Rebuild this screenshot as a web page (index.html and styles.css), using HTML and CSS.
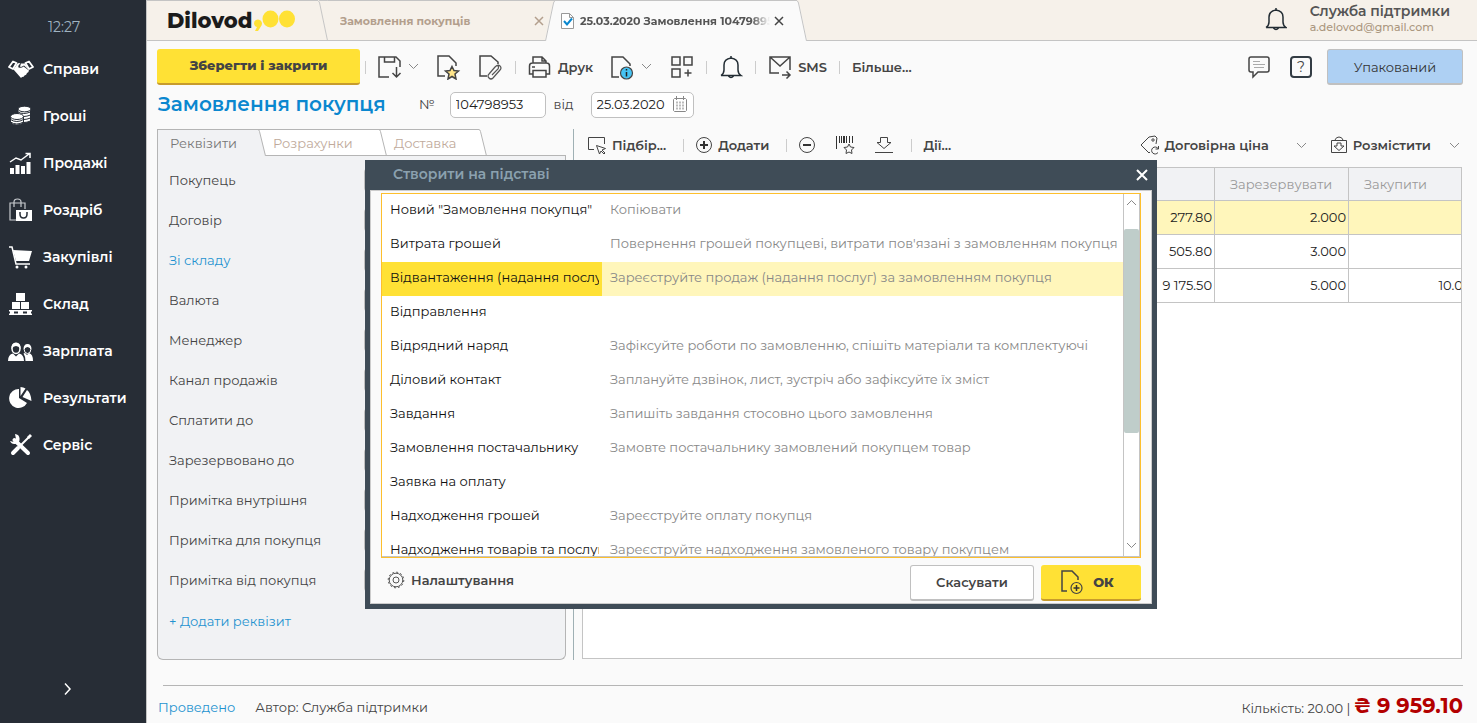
FILE: index.html
```html
<!DOCTYPE html>
<html lang="uk">
<head>
  <meta charset="UTF-8">
  <meta name="viewport" content="width=device-width, initial-scale=1.0">
  <title>25.03.2020 Замовлення 104798953</title>
  <link rel="stylesheet" href="styles.css">
</head>
<body>

  <!-- Sidebar -->
  <aside class="sidebar">
    <div class="clock">12:27</div>
    <nav class="menu">
      <a href="#"><svg width="26" height="24" viewBox="0 0 26 24"><path fill="none" stroke="#fff" stroke-width="1.800" stroke-linejoin="round" d="M1 10l4-5.500 3.500 1.500L5 12zM25 10l-4-5.500L17.500 6l3.500 6z"/><path fill="#fff" d="M5.500 12.500L9.500 6.500q1.500-1 3 0-3 2-2 4 3 1 5-1l5.500 4q-.500 2-2 2.500-.500 2-2.500 2.500-.500 1.500-2.500 1.500L13 21z"/><path fill="#fff" d="M13 6.500h4l3.500 6-4.500-4-3 1.500-1-.500z"/></svg>Справи</a>
      <a href="#"><svg width="26" height="24" viewBox="0 0 26 24"><g fill="#fff" stroke="#272d36"><path d="M10 5v12q5 3 12.500 0V5"/><ellipse cx="16.500" cy="5" rx="6.500" ry="2.800"/><path fill="none" d="M10 8q5 3 12.500 0M10 11q5 3 12.500 0M10 14q5 3 12.500 0"/><path d="M2.500 12v7q6 4 13 0v-7"/><ellipse cx="9" cy="12.500" rx="6.500" ry="3"/><path fill="none" d="M2.500 15.500q6 4 13 0M2.500 18q6 4 13 0"/></g></svg>Гроші</a>
      <a href="#"><svg width="26" height="24" viewBox="0 0 26 24"><path fill="#fff" d="M2 17h4v6H2zM7.500 14h4v9h-4zM13 15h4v8h-4zM18.500 11h4v12h-4z"/><path fill="none" stroke="#fff" stroke-width="1.500" d="M2 11l6-4 5 2 8-6M17.500 2.500H22V7"/></svg>Продажі</a>
      <a href="#"><svg width="26" height="24" viewBox="0 0 26 24"><path fill="none" stroke="#c9ccd0" stroke-width="1.200" d="M8 22H2V5h15v6M6 9V4q0-3 3.500-3T13 4v5"/><path fill="#fff" d="M8 12h16v11H8z"/><path fill="none" stroke="#272d36" stroke-width="1.500" d="M12 14v2q0 4 3.500 4t3.500-4v-2"/></svg>Роздріб</a>
      <a href="#"><svg width="26" height="24" viewBox="0 0 26 24"><path fill="#fff" d="M5 5l19 1-3 10H8z"/><path fill="none" stroke="#fff" stroke-width="1.500" d="M1 2h3l4 17h14"/><circle cx="9" cy="22" r="1.500" fill="#fff"/><circle cx="18" cy="22" r="1.500" fill="#fff"/></svg>Закупівлі</a>
      <a href="#"><svg width="26" height="24" viewBox="0 0 26 24"><path fill="#fff" d="M8 1h9v8H8zM4 10h8v7H4zM13 10h8v7h-8z"/><path fill="#fff" d="M1 18h23v1.500H1zM1 21.500h23V23H1zM2 19h4v3H2zM10 19h5v3h-5zM19 19h4v3h-4z"/></svg>Склад</a>
      <a href="#"><svg width="26" height="24" viewBox="0 0 26 24"><path fill="#fff" d="M0 22q0-6.500 5-7.500l3 3 3-3q5 1 5 7.500zM15.500 14.500l1.500-.500 2 2 2-2q4 1 4 8h-7.500q0-4.500-2-7.500z"/><ellipse cx="8" cy="9.500" rx="4" ry="5" fill="none" stroke="#fff" stroke-width="1.500"/><path fill="#fff" d="M3.500 10q-.500-6.500 4.500-6.500t4.500 6.500q-2-3-4.500-3t-4.500 3zM15.500 10.500q0-5.500 4-5.500t4 5.500q-2-2.500-4-2.500t-4 2.500z"/><ellipse cx="19.500" cy="10.500" rx="3.300" ry="4" fill="none" stroke="#fff"/></svg>Зарплата</a>
      <a href="#"><svg width="26" height="24" viewBox="0 0 26 24"><path fill="#fff" d="M11 12V3a9.500 9.500 0 1 0 8 14z"/><path fill="#fff" d="M12.500 10V1q3 0 5 1.500zM14.500 11L19 4q4 3 4.500 11z"/></svg>Результати</a>
      <a href="#"><svg width="26" height="24" viewBox="0 0 26 24"><path fill="none" stroke="#fff" stroke-width="4" stroke-linecap="round" d="M6.500 7L20 20"/><path fill="none" stroke="#fff" stroke-width="2" d="M21 4L11 14"/><path fill="none" stroke="#fff" stroke-width="4" stroke-linecap="round" d="M10 15l-5 5"/><path fill="#fff" d="M7 1a5 5 0 1 1-5 7l4 1 2-3zM19 4l3-3 2 2-3 3z"/></svg>Сервіс</a>
    </nav>
    <button class="expand" aria-label="Розгорнути"><svg width="8" height="14" viewBox="0 0 8 14"><path fill="none" stroke="#fff" stroke-width="1.500" d="M1 1.500l5 5.500-5 5.500"/></svg></button>
  </aside>

  <main class="main">
    <!-- Window tabs -->
    <header class="topbar">
      <a class="logo" href="#">Dilovod<svg width="42" height="24" viewBox="0 0 42 24"><g fill="#ffe135"><path d="M1 14.500a4 4 0 1 1 7.500 2L5 22H2l2-4q-3-1-3-3.500z"/><ellipse cx="17.500" cy="10" rx="8" ry="8.500"/><ellipse cx="34" cy="10" rx="8" ry="8.500"/></g></svg></a>
      <svg class="edge" width="10" height="41" viewBox="0 0 10 41"><path fill="none" stroke="#c4c4c4" d="M0 1q1 0 1.500 2L9.500 41M1 .500h9"/></svg>
      <div class="tab"><span class="tab-name">Замовлення покупців</span><button class="close" aria-label="Закрити"><svg width="10" height="10" viewBox="0 0 10 10"><path stroke="#b39f8d" stroke-width="1.500" d="M1 1l8 8M9 1L1 9"/></svg></button></div>
      <svg class="edge" width="10" height="41" viewBox="0 0 10 41"><path fill="#fafafa" d="M0 41L8 3l2-2v40z"/><path fill="none" stroke="#c4c4c4" d="M0 .500h10M.500 41L8.500 3q.500-2 1.500-2"/></svg>
      <div class="tab active"><svg width="13" height="16" viewBox="0 0 13 16"><path fill="#fff" stroke="#999" d="M.500.500h8l4 4v11H.500zM8.500.500v4h4"/><path fill="none" stroke="#0a87cf" stroke-width="2" d="M3 8l3 3.500 5-6"/></svg><span class="tab-name">25.03.2020 Замовлення 104798953</span><button class="close" aria-label="Закрити"><svg width="10" height="10" viewBox="0 0 10 10"><path stroke="#444" stroke-width="1.500" d="M1 1l8 8M9 1L1 9"/></svg></button></div>
      <svg class="edge" width="10" height="41" viewBox="0 0 10 41"><path fill="#fafafa" d="M0 1l2 2 8 38H0z"/><path fill="none" stroke="#c4c4c4" d="M0 1q1 0 1.500 2L9.500 41"/></svg>
      <div class="account">
        <button class="icon-btn" aria-label="Сповіщення"><svg width="22" height="24" viewBox="0 0 22 24"><path fill="none" stroke="#222c33" stroke-width="1.500" d="M1 20.500h20q-3-2-3-5.500v-5q0-6-7-7-7 1-7 7v5q0 3.500-3 5.500M11 3V1M8.500 21q2.500 3 5 0"/></svg></button>
        <div class="user">
          <div class="user-name">Служба підтримки</div>
          <a href="#">a.delovod@gmail.com</a>
        </div>
      </div>
    </header>

    <!-- Toolbar -->
    <div class="toolbar">
      <button class="btn primary save">Зберегти і закрити</button>
      <i class="sep"></i>
      <button class="tool" aria-label="Записати"><svg width="24" height="24" viewBox="0 0 24 24"><g fill="none" stroke="#444" stroke-width="1.500"><path d="M11 22H1V2h17l4 4v6M6.500 2v5h10V2M18.500 12v10M14.500 18l4 4 4-4"/></g></svg><svg class="caret" width="11" height="7" viewBox="0 0 11 7"><path d="M1 1l4.500 4.500L10 1"/></svg></button>
      <button class="tool" aria-label="Обране"><svg width="24" height="26" viewBox="0 0 24 26"><path fill="none" stroke="#444" stroke-width="1.500" d="M8 22H1V2h11l7 7v3"/><path fill="#ffe58a" stroke="#444" stroke-width="1.500" d="M15 12.500l2 4 4.500.500-3.500 3 1 5-4-2.500-4 2.500 1-5-3.500-3 4.500-.500z"/></svg></button>
      <button class="tool" aria-label="Файли"><svg width="24" height="26" viewBox="0 0 24 26"><path fill="none" stroke="#444" stroke-width="1.500" d="M8 22H1V2h11l7 6v2"/><path fill="none" stroke="#555" stroke-width="1.200" d="M10 20l6-7q3-3 5-1t0 4l-7 8q-2 2-4 0t0-4l6-7q2-2 3-1t0 3l-6 6"/></svg></button>
      <i class="sep"></i>
      <button class="tool"><svg width="24" height="24" viewBox="0 0 24 24"><g fill="none" stroke="#444" stroke-width="1.500"><path d="M5 8V2h9l4 4v2M14 2v4h4M5 19H1.500v-8q0-3 3-3h14q3 0 3 3v8H18M5 15.500h13V22H5zM4 12h3"/></g></svg>Друк</button>
      <button class="tool" aria-label="Інформація"><svg width="24" height="26" viewBox="0 0 24 26"><path fill="none" stroke="#444" stroke-width="1.500" d="M8 23H1V3h11l7 7v2"/><circle cx="15.500" cy="19" r="6" fill="#46c3f3" stroke="#444" stroke-width="1.200"/><path stroke="#222" stroke-width="1.500" d="M15.500 18v4.500M15.500 15v1.500"/></svg><svg class="caret" width="11" height="7" viewBox="0 0 11 7"><path d="M1 1l4.500 4.500L10 1"/></svg></button>
      <button class="tool" aria-label="Додатки"><svg width="24" height="24" viewBox="0 0 24 24"><path fill="none" stroke="#444" stroke-width="1.500" d="M2 2h8v8H2zM14 2h8v8h-8zM2 14h8v8H2zM18 14.500v7M14.500 18h7"/></svg></button>
      <i class="sep"></i>
      <button class="tool" aria-label="Нагадування"><svg width="24" height="24" viewBox="0 0 22 24"><path fill="none" stroke="#222c33" stroke-width="1.500" d="M1 20.500h20q-3-2-3-5.500v-5q0-6-7-7-7 1-7 7v5q0 3.500-3 5.500M11 3V1M8.500 21q2.500 3 5 0"/></svg></button>
      <i class="sep"></i>
      <button class="tool"><svg width="24" height="24" viewBox="0 0 24 24"><path fill="none" stroke="#444" stroke-width="1.500" d="M11 18H2V2h20v13M2 2l10 9L22 2M14 20h8M18.500 16.500L22 20l-3.500 3.500"/></svg>SMS</button>
      <i class="sep"></i>
      <button class="tool">Більше...</button>
      <div class="toolbar-right">
        <button class="icon-btn" aria-label="Коментар"><svg width="22" height="24" viewBox="0 0 22 24"><path fill="none" stroke="#444" stroke-width="1.500" d="M5 22v-5H3q-2 0-2-2V4q0-2 2-2h16q2 0 2 2v11q0 2-2 2h-9z"/><path stroke="#aaa" d="M5 6.500h7M5 9.500h12M6 12.500h10"/></svg></button>
        <button class="help" aria-label="Довідка">?</button>
        <button class="btn status">Упакований</button>
      </div>
    </div>

    <!-- Document title -->
    <div class="doc-head">
      <h1>Замовлення покупця</h1>
      <label for="num">№</label>
      <input id="num" class="field" type="text" value="104798953">
      <label for="date">від</label>
      <div class="date-box">
        <input id="date" class="field" type="text" value="25.03.2020">
        <svg width="14" height="16" viewBox="0 0 14 16"><path fill="none" stroke="#888" d="M1.500 2.500h11l1 1v11l-1 1h-11l-1-1v-11zM3.500 0v4M10.500 0v4"/><path stroke="#bbb" stroke-width="2" stroke-dasharray="2 1" d="M3 6.500h9M3 9.500h9M3 12.500h9"/></svg>
      </div>
    </div>

    <div class="content">
      <!-- Requisites -->
      <section class="details">
        <div class="subtabs">
          <button class="subtab on">Реквізити</button>
          <svg width="8" height="27" viewBox="0 0 8 27"><path fill="#f1f2f4" d="M0 1h1l7 26H0z"/><path fill="#fff" d="M1 1h7v25z"/><path fill="none" stroke="#b5b5b5" d="M0 .500q1 0 1.500 2L7.500 27M0 .500h8"/></svg>
          <button class="subtab">Розрахунки</button>
          <svg width="8" height="27" viewBox="0 0 8 27"><path fill="#fff" d="M0 1h8v25H0z"/><path fill="none" stroke="#b5b5b5" d="M0 .500q1 0 1.500 2L7.500 27M0 .500h8M0 26.500h8"/></svg>
          <button class="subtab">Доставка</button>
          <svg width="8" height="27" viewBox="0 0 8 27"><path fill="#fff" d="M0 1l2 2 5 23H0z"/><path fill="none" stroke="#b5b5b5" d="M0 .500q1 0 1.500 2L7.500 27M0 26.500h8"/></svg>
          <span class="subtabs-rest"></span>
        </div>
        <form class="form">
          <div class="row"><label for="f1">Покупець</label><input id="f1" class="field" type="text"></div>
          <div class="row"><label for="f2">Договір</label><input id="f2" class="field" type="text"></div>
          <div class="row"><label for="f3" class="blue">Зі складу</label><input id="f3" class="field" type="text"></div>
          <div class="row"><label for="f4">Валюта</label><input id="f4" class="field" type="text"></div>
          <div class="row"><label for="f5">Менеджер</label><input id="f5" class="field" type="text"></div>
          <div class="row"><label for="f6">Канал продажів</label><input id="f6" class="field" type="text"></div>
          <div class="row"><label for="f7">Сплатити до</label><input id="f7" class="field" type="text"></div>
          <div class="row"><label for="f8">Зарезервовано до</label><input id="f8" class="field" type="text"></div>
          <div class="row"><label for="f9">Примітка внутрішня</label><input id="f9" class="field" type="text"></div>
          <div class="row"><label for="f10">Примітка для покупця</label><input id="f10" class="field" type="text"></div>
          <div class="row"><label for="f11">Примітка від покупця</label><input id="f11" class="field" type="text"></div>
          <div class="row add"><a class="blue" href="#">+ Додати реквізит</a></div>
        </form>
      </section>

      <!-- Goods -->
      <section class="goods">
        <div class="goods-bar">
          <button class="tool"><svg width="20" height="20" viewBox="0 0 20 20"><path fill="none" stroke="#444" d="M7 14.500H1.500v-12h16V9"/><path fill="none" stroke="#444" d="M9.500 10.500l9 3-3.500 1.500 3 3-1 1-3-3-1.500 3z"/></svg>Підбір...</button>
          <i class="sep"></i>
          <button class="tool"><svg width="18" height="18" viewBox="0 0 18 18"><circle cx="9" cy="9" r="7.500" fill="none" stroke="#444"/><path stroke="#333" stroke-width="2" d="M5 9h8M9 5v8"/></svg>Додати</button>
          <i class="sep"></i>
          <button class="tool" aria-label="Видалити"><svg width="18" height="18" viewBox="0 0 18 18"><circle cx="9" cy="9" r="7.500" fill="none" stroke="#444"/><path stroke="#333" stroke-width="2" d="M5 9h8"/></svg></button>
          <button class="tool" aria-label="Штрихкод"><svg width="20" height="20" viewBox="0 0 20 20"><path stroke="#333" d="M1.500 1v13M4.500 1v7M6.500 1v7M11.500 1v7M14.500 1v7M17.500 1v7"/><path stroke="#333" stroke-width="2" d="M9 1v7"/><path fill="#fafafa" stroke="#444" d="M14 9l1.500 3 3.500.500-2.500 2.500.500 3.500-3-1.500-3 1.500.500-3.500L9 12.500l3.500-.500z"/></svg></button>
          <button class="tool" aria-label="Імпорт"><svg width="20" height="20" viewBox="0 0 20 20"><path fill="none" stroke="#444" d="M6.500 2.500h7v5H17l-7 6-7-6h3.500zM1 17.500h18"/></svg></button>
          <i class="sep"></i>
          <button class="tool">Дії...</button>
          <div class="goods-right">
            <button class="tool price"><svg width="20" height="20" viewBox="0 0 20 20"><path fill="none" stroke="#444" d="M10 17l-1 1-8-8 8-8 6-1 2 2-1 6M18 13.500a3.500 3.500 0 1 0 0 4M18.500 11v3h-3"/><circle cx="13" cy="5" r="1.200" fill="none" stroke="#444"/></svg>Договірна ціна<svg class="caret" width="11" height="7" viewBox="0 0 11 7"><path d="M1 1l4.500 4.500L10 1"/></svg></button>
            <button class="tool place"><svg width="18" height="18" viewBox="0 0 18 18"><path fill="none" stroke="#444" d="M1.500 4.500h15v12h-15zM5 4q1-3 4-3t4 3M7 7h4v3h3l-5 4.500L4 10h3z"/></svg>Розмістити<svg class="caret" width="11" height="7" viewBox="0 0 11 7"><path d="M1 1l4.500 4.500L10 1"/></svg></button>
          </div>
        </div>
        <div class="grid-box">
          <table class="goods-table">
            <thead>
              <tr><th></th><th class="num">Зарезервувати</th><th class="num">Закупити</th></tr>
            </thead>
            <tbody>
              <tr class="current"><td>277.80</td><td>2.000</td><td></td></tr>
              <tr><td>505.80</td><td>3.000</td><td></td></tr>
              <tr><td>9 175.50</td><td>5.000</td><td>10.000</td></tr>
            </tbody>
          </table>
        </div>
      </section>
    </div>

    <footer class="footer">
      <a class="blue" href="#">Проведено</a>
      <span class="author">Автор: Служба підтримки</span>
      <span class="total">Кількість: 20.00 | <b>₴ 9 959.10</b></span>
    </footer>
  </main>

  <!-- Dialog -->
  <div class="dialog" role="dialog" aria-labelledby="dlg-title">
    <div class="dialog-head">
      <h2 id="dlg-title">Створити на підставі</h2>
      <button class="close" aria-label="Закрити"><svg width="12" height="12" viewBox="0 0 12 12"><path stroke="#fff" stroke-width="2" d="M1 1l10 10M11 1L1 11"/></svg></button>
    </div>
    <div class="dialog-body">
      <div class="list">
        <div class="list-view">
          <table class="list-table">
            <tr><td>Новий "Замовлення покупця"</td><td>Копіювати</td></tr>
            <tr><td>Витрата грошей</td><td>Повернення грошей покупцеві, витрати пов'язані з замовленням покупця</td></tr>
            <tr class="selected"><td>Відвантаження (надання послуг)</td><td>Зареєструйте продаж (надання послуг) за замовленням покупця</td></tr>
            <tr><td>Відправлення</td><td></td></tr>
            <tr><td>Відрядний наряд</td><td>Зафіксуйте роботи по замовленню, спішіть матеріали та комплектуючі</td></tr>
            <tr><td>Діловий контакт</td><td>Заплануйте дзвінок, лист, зустріч або зафіксуйте їх зміст</td></tr>
            <tr><td>Завдання</td><td>Запишіть завдання стосовно цього замовлення</td></tr>
            <tr><td>Замовлення постачальнику</td><td>Замовте постачальнику замовлений покупцем товар</td></tr>
            <tr><td>Заявка на оплату</td><td></td></tr>
            <tr><td>Надходження грошей</td><td>Зареєструйте оплату покупця</td></tr>
            <tr><td>Надходження товарів та послуг</td><td>Зареєструйте надходження замовленого товару покупцем</td></tr>
          </table>
        </div>
        <div class="scroll">
          <svg class="caret" width="11" height="7" viewBox="0 0 11 7"><path d="M1 6l4.500-4.500L10 6"/></svg>
          <div class="track"><div class="thumb"></div></div>
          <svg class="caret" width="11" height="7" viewBox="0 0 11 7"><path d="M1 1l4.500 4.500L10 1"/></svg>
        </div>
      </div>
      <div class="dialog-foot">
        <button class="tool settings"><svg width="18" height="18" viewBox="0 0 18 18"><circle cx="9" cy="9" r="6.800" fill="none" stroke="#555"/><circle cx="9" cy="9" r="7.800" fill="none" stroke="#555" stroke-dasharray="2 2.080"/><circle cx="9" cy="9" r="3" fill="none" stroke="#555"/></svg>Налаштування</button>
        <button class="btn cancel">Скасувати</button>
        <button class="btn primary ok"><svg width="24" height="26" viewBox="0 0 24 26"><path fill="none" stroke="#444" stroke-width="1.500" d="M7 22H2V2h10l6 6v3"/><circle cx="16.500" cy="19" r="5.500" fill="none" stroke="#444" stroke-width="1.200"/><path stroke="#333" stroke-width="1.500" d="M13.500 19h6M16.500 16v6"/></svg>ОК</button>
      </div>
    </div>
  </div>

</body>
</html>
```
FILE: styles.css
```css
* {
  box-sizing: border-box;
}

body {
  margin: 0;
  min-height: 100vh;
  display: flex;
  background: #fafafa;
  color: #444;
  font-family: Montserrat, Inter, "Open Sans", sans-serif;
  font-size: 13px;
  line-height: 20px;
}

a {
  color: inherit;
  text-decoration: none;
}

button,
input {
  font: inherit;
  color: inherit;
}

button {
  display: inline-flex;
  align-items: center;
  padding: 0;
  border: 0;
  background: none;
  cursor: pointer;
}

svg {
  flex: none;
  display: block;
}

.blue {
  color: #1f93d0;
}

.caret {
  fill: none;
  stroke: #888;
}

/* Sidebar */
.sidebar {
  width: 146px;
  flex: none;
  display: flex;
  flex-direction: column;
  align-items: flex-start;
  background: #272d36;
  color: #fff;
}

.clock {
  margin: 17px 0 8px 48px;
  color: #9fb3c1;
  font-size: 14px;
}

.menu a {
  display: flex;
  align-items: center;
  gap: 9px;
  height: 47px;
  padding-left: 8px;
  font-size: 14px;
  font-weight: 600;
}

.expand {
  margin: auto 0 24px 64px;
  height: 20px;
}

/* Top tabs */
.main {
  flex: 1;
  min-width: 0;
  display: flex;
  flex-direction: column;
  border-left: 1px solid #c4c4c4;
}

.topbar {
  display: flex;
  height: 41px;
  background: #f6f1ea;
}

.logo,
.tab {
  display: flex;
  align-items: center;
  border-top: 1px solid #c4c4c4;
  border-bottom: 1px solid #c4c4c4;
}

.logo {
  width: 171px;
  padding-left: 20px;
  color: #1b1b1b;
  font-size: 21px;
  font-weight: 800;
}

.edge {
  border-bottom: 1px solid #c4c4c4;
}

.tab {
  width: 217px;
  padding: 0 1px 0 12px;
  color: #b39f8d;
  font-size: 11px;
  font-weight: 700;
}

.tab-name {
  flex: 1;
  overflow: hidden;
  white-space: nowrap;
}

.tab.active {
  width: 242px;
  padding: 0 13px 0 6px;
  border-bottom: 0;
  background: #fafafa;
  color: #555;
}

.tab.active .tab-name {
  margin: 0 4px 0 6px;
  mask-image: linear-gradient(to right, #000 90%, transparent);
}

.tab.active + .edge,
.edge:has(+ .active) {
  border-bottom: 0;
}

.account {
  flex: 1;
  display: flex;
  align-items: center;
  justify-content: flex-end;
  gap: 23px;
  padding: 0 27px 2px 0;
  border-bottom: 1px solid #c4c4c4;
}

.user {
  color: #ab977f;
  font-size: 11px;
  font-weight: 500;
  line-height: 16px;
}

.user-name {
  color: #555;
  font-size: 14px;
  font-weight: 600;
}

/* Toolbar */
.toolbar {
  display: flex;
  align-items: center;
  padding: 8px 14px 0 10px;
}

.btn {
  height: 36px;
  justify-content: center;
  border-radius: 3px;
}

.primary {
  border-bottom: 2px solid #c79b2c;
  background: #ffe135;
  font-weight: 800;
}

.save {
  width: 203px;
  margin-right: 2px;
  padding-bottom: 2px;
}

.sep {
  flex: none;
  width: 1px;
  height: 13px;
  margin: 0 3px;
  background: #ccc;
}

.tool {
  flex: none;
  gap: 6px;
  margin: 0 9px;
  padding-bottom: 1px;
  font-weight: 600;
}

.toolbar-right {
  display: flex;
  align-items: center;
  gap: 20px;
  margin-left: auto;
}

.help {
  width: 22px;
  height: 22px;
  justify-content: center;
  border: 2px solid #333c44;
  border-radius: 4px;
  font-size: 14px;
}

.status {
  width: 136px;
  margin-left: -5px;
  border: 1px solid #c0c0c0;
  border-bottom-width: 2px;
  background: #aed0f3;
  color: #333;
}

/* Document title */
.doc-head {
  display: flex;
  align-items: center;
  padding: 7px 11px 0;
}

.doc-head h1 {
  width: 261px;
  margin: 0;
  padding-bottom: 2px;
  color: #0a87cf;
  font-size: 20px;
  font-weight: 600;
}

.doc-head label {
  padding-bottom: 2px;
}

.field {
  height: 26px;
  padding: 0 5px 2px;
  border: 1px solid #c0c0c0;
  border-radius: 5px;
  background: #fff;
  color: #222;
}

#num {
  width: 96px;
  margin: 0 8px 0 15px;
}

.date-box {
  position: relative;
  margin-left: 17px;
}

.date-box .field {
  width: 103px;
}

.date-box svg {
  position: absolute;
  top: 4px;
  right: 7px;
}

/* Content */
.content {
  flex: 1;
  display: flex;
  padding: 11px 15px 0 10px;
}

.details {
  width: 409px;
  flex: none;
  display: flex;
  flex-direction: column;
}

.subtabs {
  display: flex;
  height: 27px;
}

.subtab {
  width: 113px;
  padding-left: 7px;
  border-top: 1px solid #b5b5b5;
  border-bottom: 1px solid #b5b5b5;
  background: #fff;
  color: #c0aa9b;
}

.subtab.on {
  width: 101px;
  padding-left: 12px;
  border-bottom: 0;
  border-left: 1px solid #b5b5b5;
  background: #f1f2f4;
  color: #777;
}

.subtab:nth-of-type(3) {
  width: 92px;
}

.subtabs-rest {
  flex: 1;
  border-bottom: 1px solid #b5b5b5;
}

.form {
  flex: 1;
  padding: 4px 10px 17px 11px;
  border: 1px solid #b5b5b5;
  border-top: 0;
  border-radius: 0 0 6px 6px;
  background: #f1f2f4;
}

.row {
  display: flex;
  align-items: center;
  height: 40px;
}

.row.add {
  height: 41px;
  padding-top: 1px;
}

.row label {
  width: 195px;
}

.row .field {
  flex: 1;
  min-width: 0;
}

.goods {
  flex: 1;
  min-width: 0;
  display: flex;
  flex-direction: column;
  margin-left: 7px;
  padding-left: 8px;
  border-left: 1px solid #9fb0b4;
}

.goods-bar {
  display: flex;
  align-items: center;
  height: 38px;
  margin-left: -3px;
  padding-bottom: 5px;
}

.goods-bar .tool {
  gap: 5px;
  margin: 0 11px 0 8px;
}

.goods-bar .sep {
  margin: 0 3px 0 6px;
}

.goods-right {
  display: flex;
  margin: 0 2px 0 auto;
}

.price .caret {
  margin-left: 22px;
}

.place .caret {
  margin-left: 13px;
}

.goods-bar .place {
  margin: 0 0 0 12px;
}

.grid-box {
  flex: 1;
  overflow: hidden;
  margin-bottom: 1px;
  border: 1px solid #c4c4c4;
  background: #fff;
}

.goods-table {
  width: calc(100% + 22px);
  border-collapse: separate;
  border-spacing: 0;
  table-layout: fixed;
  color: #222;
}

.goods-table th,
.goods-table td {
  height: 34px;
  padding: 0 2px 2px;
  border-right: 1px solid #c4c4c4;
  border-bottom: 1px solid #c4c4c4;
  text-align: right;
}

.goods-table th {
  height: 33px;
  padding: 0 15px;
  background: #f1f2f4;
  color: #999;
  font-weight: 400;
  text-align: left;
}

.goods-table .num {
  width: 134px;
}

.goods-table .current {
  background: #fff6bb;
}

/* Footer */
.footer {
  display: flex;
  align-items: center;
  height: 38px;
  margin: 25px 14px 0 16px;
  padding-top: 5px;
  border-top: 1px solid #b5b5b5;
}

.footer .blue {
  margin-left: -5px;
}

.author {
  margin-left: 20px;
}

.total {
  margin-left: auto;
}

.total b {
  color: #b30000;
  font-size: 21px;
}

/* Dialog */
.dialog {
  position: absolute;
  top: 160px;
  left: 365px;
  width: 792px;
  padding: 0 5px 5px;
  background: #3f4c57;
}

.dialog-head {
  display: flex;
  align-items: center;
  justify-content: space-between;
  height: 30px;
  padding: 0 4px 0 23px;
}

.dialog-head h2 {
  margin: 0;
  padding-bottom: 2px;
  color: #8ba1af;
  font-size: 14px;
  font-weight: 600;
}

.dialog-body {
  padding: 2px 10px;
  border: 1px solid #ccc;
  background: #fafafa;
}

.list {
  display: flex;
  height: 365px;
  border: 1px solid #fdbf2d;
  background: #fff;
}

.list-view {
  flex: 1;
  overflow: hidden;
  border-bottom: 1px solid #c4c4c4;
}

.list-table {
  width: 100%;
  border-collapse: separate;
  border-spacing: 0;
  table-layout: fixed;
  color: #888;
}

.list-table td {
  height: 34px;
  padding: 0 0 4px 8px;
  overflow: hidden;
  white-space: nowrap;
}

.list-table td:first-child {
  width: 220px;
  border-right: 3px solid transparent;
  color: #111;
}

.selected td {
  background: #fff6bb;
}

.selected td:first-child {
  background: #ffe135;
}

.scroll {
  width: 17px;
  display: flex;
  flex-direction: column;
  align-items: center;
  padding: 5px 0 7px;
  border: solid #c4c4c4;
  border-width: 0 1px 1px;
}

.track {
  flex: 1;
  width: 15px;
  padding-top: 23px;
}

.thumb {
  height: 204px;
  border-radius: 2px;
  background: #bfcdca;
}

.dialog-foot {
  display: flex;
  align-items: center;
  gap: 7px;
  height: 43px;
  padding-top: 7px;
}

.dialog-foot .settings {
  margin: 0 auto 6px 6px;
}

.cancel {
  width: 124px;
  padding-bottom: 2px;
  border: 1px solid #c0c0c0;
  border-bottom-width: 2px;
  background: #fff;
  font-weight: 600;
}

.ok {
  width: 100px;
  gap: 9px;
  padding-right: 8px;
}
```
